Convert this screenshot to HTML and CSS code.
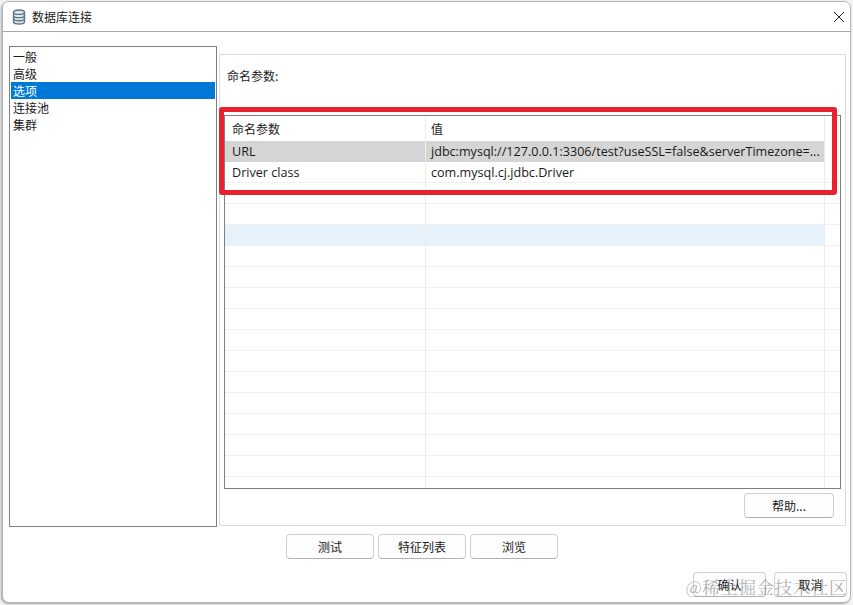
FILE: index.html
```html
<!DOCTYPE html>
<html lang="zh">
<head>
<meta charset="utf-8">
<title>数据库连接</title>
<link rel="stylesheet" href="styles.css">
</head>
<body>
<div class="window">
  <header class="titlebar">
    <svg class="db-icon" width="14" height="16" viewBox="0 0 14 16" fill="none" stroke="#5d7689" stroke-width="1.4">
      <path d="M1.5 3.2C1.5 1.9 4 1 7 1s5.5 .9 5.5 2.2v9.6C12.5 14.1 10 15 7 15s-5.5 -.9 -5.500 -2.200z" fill="#dfe6eb"/>
      <path d="M1.5 3.2C1.5 4.500 4 5.400 7 5.400s5.500 -.9 5.500 -2.200M1.500 6.400C1.500 7.700 4 8.600 7 8.600s5.500 -.9 5.500 -2.200M1.500 9.600c0 1.300 2.500 2.200 5.500 2.200s5.500 -.9 5.500 -2.200"/>
    </svg>
    <span class="title">数据库连接</span>
    <svg class="close" width="12" height="12" viewBox="0 0 12 12" stroke="#222" stroke-width="1"><path d="M1 1l10 10M11 1L1 11"/></svg>
  </header>
  <div class="content">
    <div class="main">
      <ul class="nav">
        <li>一般</li>
        <li>高级</li>
        <li class="active">选项</li>
        <li>连接池</li>
        <li>集群</li>
      </ul>
      <section class="panel">
        <div class="panel-label">命名参数:</div>
        <div class="table">
          <div class="row head"><div class="c1">命名参数</div><div class="c2">值</div><div class="c3"></div></div>
          <div class="row selected"><div class="c1 latin">URL</div><div class="c2 latin">jdbc:mysql://127.0.0.1:3306/test?useSSL=false&amp;serverTimezone=...</div><div class="c3"></div></div>
          <div class="row"><div class="c1 latin">Driver class</div><div class="c2 latin">com.mysql.cj.jdbc.Driver</div><div class="c3"></div></div>
          <div class="row"><div class="c1"></div><div class="c2"></div><div class="c3"></div></div>
          <div class="row"><div class="c1"></div><div class="c2"></div><div class="c3"></div></div>
          <div class="row hover"><div class="c1"></div><div class="c2"></div><div class="c3"></div></div>
          <div class="row"><div class="c1"></div><div class="c2"></div><div class="c3"></div></div>
          <div class="row"><div class="c1"></div><div class="c2"></div><div class="c3"></div></div>
          <div class="row"><div class="c1"></div><div class="c2"></div><div class="c3"></div></div>
          <div class="row"><div class="c1"></div><div class="c2"></div><div class="c3"></div></div>
          <div class="row"><div class="c1"></div><div class="c2"></div><div class="c3"></div></div>
          <div class="row"><div class="c1"></div><div class="c2"></div><div class="c3"></div></div>
          <div class="row"><div class="c1"></div><div class="c2"></div><div class="c3"></div></div>
          <div class="row"><div class="c1"></div><div class="c2"></div><div class="c3"></div></div>
          <div class="row"><div class="c1"></div><div class="c2"></div><div class="c3"></div></div>
          <div class="row"><div class="c1"></div><div class="c2"></div><div class="c3"></div></div>
          <div class="row"><div class="c1"></div><div class="c2"></div><div class="c3"></div></div>
          <div class="row last"><div class="c1"></div><div class="c2"></div><div class="c3"></div></div>
        </div>
        <div class="help-row"><button class="btn help">帮助...</button></div>
      </section>
    </div>
    <div class="actions">
      <button class="btn">测试</button>
      <button class="btn">特征列表</button>
      <button class="btn">浏览</button>
    </div>
    <div class="footer">
      <button class="btn small">确认</button>
      <button class="btn small">取消</button>
    </div>
  </div>
</div>
<div class="annotation"></div>
<div class="watermark">@稀土掘金技术社区</div>
</body>
</html>
```
FILE: styles.css
```css
* { box-sizing: border-box; }
html, body { margin: 0; height: 100%; }
body {
  position: relative;
  width: 853px;
  height: 605px;
  overflow: hidden;
  background: #f2f2f2;
  padding: 1px 2px 2px 2px;
  font-family: "Open Sans", "Noto Sans CJK SC", sans-serif;
  font-size: 12px;
  color: #1a1a1a;
}
.window {
  height: 602px;
  background: #fff;
  border-radius: 7px;
  border: 1px solid #b5b5b5;
  box-shadow: -1px 1px 2px #a8a8a8;
  display: flex;
  flex-direction: column;
  overflow: hidden;
}
.titlebar {
  height: 30px;
  flex: none;
  display: flex;
  align-items: center;
  padding: 0 5px 0 9px;
  border-bottom: 1px solid #a8a8a8;
  background: #fff;
}
.db-icon { flex: none; margin-right: 6px; }
.title { flex: 1; font-family: "Noto Sans CJK SC", sans-serif; }
.close { flex: none; }
.content {
  flex: 1;
  padding: 14px 4px 0 6px;
  display: flex;
  flex-direction: column;
}
.main { display: flex; gap: 2px; height: 481px; flex: none; }
.nav {
  list-style: none;
  margin: 0;
  padding: 1px;
  width: 208px;
  height: 481px;
  border: 1px solid #7f7f7f;
  font-family: "Noto Sans CJK SC", sans-serif;
  line-height: 17px;
}
.nav li { height: 17px; padding-left: 2px; }
.nav .active { background: #0078d7; color: #fff; }
.panel {
  flex: 1;
  margin-top: 8px;
  height: 472px;
  border: 1px solid #dcdcdc;
  padding: 0 4px;
  display: flex;
  flex-direction: column;
}
.panel-label {
  height: 60px;
  padding: 12px 0 0 3px;
  font-family: "Noto Sans CJK SC", sans-serif;
  line-height: 18px;
}
.table {
  height: 374px;
  flex: none;
  border: 1px solid #7f7f7f;
  overflow: hidden;
}
.row {
  display: flex;
  height: 21px;
  border-bottom: 1px solid #f0f0f0;
  line-height: 21px;
}
.row.head { height: 25px; line-height: 24px; padding-top: 1px; border-bottom: 0; font-family: "Noto Sans CJK SC", sans-serif; }
.row.last { border-bottom: 0; }
.c1 { width: 201px; flex: none; padding-left: 7px; border-right: 1px solid #ececec; }
.c2 { flex: 1; min-width: 0; padding-left: 5px; white-space: nowrap; overflow: hidden; }
.c3 { width: 16px; flex: none; border-left: 1px solid #ececec; background: #fff; }
.latin { font-family: "Open Sans", sans-serif; font-size: 12.6px; }
.selected { border-bottom: 0; }
.selected .c1, .selected .c2 { background: #d5d5d5; }
.hover .c1, .hover .c2 { background: #e5f2fb; }
.help-row { display: flex; justify-content: flex-end; padding: 4px 7px 0 0; }
.btn {
  width: 88px;
  height: 25px;
  padding: 0;
  background: #fdfdfd;
  border: 1px solid #d0d0d0;
  border-bottom-color: #b0b0b0;
  border-radius: 4px;
  font-family: "Noto Sans CJK SC", sans-serif;
  font-size: 12px;
  color: #1a1a1a;
}
.btn.help { width: 90px; }
.actions {
  display: flex;
  justify-content: flex-start;
  gap: 4px;
  padding: 7px 0 0 277px;
}
.footer {
  display: flex;
  justify-content: flex-end;
  gap: 8px;
  padding: 13px 0 0 0;
  margin-right: -1px;
}
.btn.small { width: 73px; height: 25px; }
.annotation {
  position: absolute;
  left: 219px;
  top: 107px;
  width: 618px;
  height: 88px;
  border: 5px solid #e8202f;
  border-radius: 3px;
  pointer-events: none;
}
.watermark {
  position: absolute;
  right: 6px;
  top: 576px;
  font-family: "Noto Serif CJK SC", "Noto Sans CJK SC", sans-serif;
  font-size: 17.5px;
  line-height: 22px;
  color: rgba(110, 110, 110, 0.55);
  letter-spacing: 0.6px;
}
```
